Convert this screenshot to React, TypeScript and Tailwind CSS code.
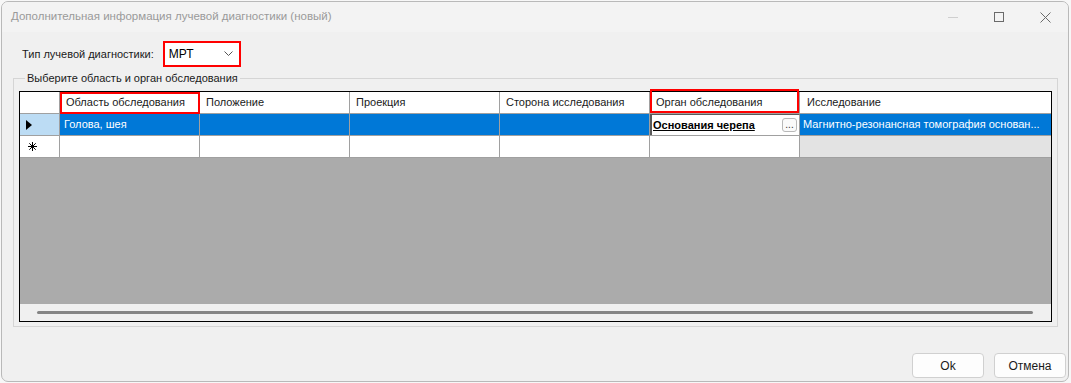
const COLUMNS = [
  { title: "Область обследования", w: "w-[140px]", marked: "box" },
  { title: "Положение", w: "w-[150px]" },
  { title: "Проекция", w: "w-[150px]" },
  { title: "Сторона исследования", w: "w-[150px]" },
  { title: "Орган обследования", w: "w-[150px]", marked: "tall" },
];

function TitleBar() {
  return (
    <div className="h-[30px] bg-[#f3f3f3] flex items-center text-[11.5px] text-[#9a9a9a]">
      <span className="pl-[9px] whitespace-nowrap">Дополнительная информация лучевой диагностики (новый)</span>
      <div className="ml-auto flex h-full">
        <div className="w-[46px] flex items-center justify-center">
          <div className="w-[10px] h-px bg-[#cfcfcf]" />
        </div>
        <div className="w-[46px] flex items-center justify-center">
          <div className="w-[10px] h-[10px] border border-[#6a6a6a]" />
        </div>
        <div className="w-[46px] flex items-center justify-center">
          <svg width="11" height="11" viewBox="0 0 11 11">
            <path d="M0.5 0.5 L10.5 10.5 M10.5 0.5 L0.5 10.5" stroke="#6a6a6a" strokeWidth="1" />
          </svg>
        </div>
      </div>
    </div>
  );
}

function Grid() {
  return (
    <div className="border border-black bg-[#ababab] h-[231px] flex flex-col">
      {/* header */}
      <div className="flex h-[22px] bg-white border-b border-[#a0a0a0]">
        <div className="w-[40px] border-r border-[#a0a0a0]" />
        {COLUMNS.map((c) => (
          <div
            key={c.title}
            className={`${c.w} relative border-r border-[#a0a0a0] pl-[6px] flex items-center whitespace-nowrap`}
          >
            {c.title}
            {c.marked === "box" && (
              <div className="absolute left-0 top-0 -right-px -bottom-px border-2 border-[#ff0000]" />
            )}
            {c.marked === "tall" && (
              <div className="absolute left-0 -top-[3px] right-0 bottom-0 border-2 border-[#ff0000]" />
            )}
          </div>
        ))}
        <div className="flex-1 pl-[7px] flex items-center">Исследование</div>
      </div>

      {/* selected row */}
      <div className="flex h-[22px] border-b border-[#a0a0a0]">
        <div className="w-[40px] border-r border-[#a0a0a0] bg-[#bcdcf4] flex items-center pl-[6px]">
          <svg width="6" height="10" viewBox="0 0 6 10">
            <path d="M0 0 L6 5 L0 10 Z" fill="#000" />
          </svg>
        </div>
        <div className="w-[140px] border-r border-[#a0a0a0] bg-[#0078d7] text-white pl-[4px] flex items-center">
          Голова, шея
        </div>
        <div className="w-[150px] border-r border-[#a0a0a0] bg-[#0078d7]" />
        <div className="w-[150px] border-r border-[#a0a0a0] bg-[#0078d7]" />
        <div className="w-[150px] border-r border-[#a0a0a0] bg-[#0078d7]" />
        <div className="w-[150px] border-r border-[#a0a0a0] bg-white flex items-center border-l-2 border-l-[#5a5a5a] border-t border-t-[#5a5a5a] pl-[1px] pr-[2px]">
          <span className="font-bold underline text-black whitespace-nowrap">Основания черепа</span>
          <div className="ml-auto w-[15px] h-[14px] rounded-[3px] border border-[#b8b8b8] bg-[#fafafa] text-[10px] leading-[8px] flex items-center justify-center text-[#333]">
            ...
          </div>
        </div>
        <div className="flex-1 min-w-0 bg-[#0078d7] text-white pl-[3px] flex items-center whitespace-nowrap overflow-hidden">
          Магнитно-резонансная томография основан...
        </div>
      </div>

      {/* new row */}
      <div className="flex h-[22px] border-b border-[#a0a0a0] bg-white">
        <div className="w-[40px] border-r border-[#a0a0a0] flex items-center pl-[8px]">
          <svg width="9" height="9" viewBox="0 0 9 9">
            <path
              d="M4.5 0 V9 M0 4.5 H9 M1.3 1.3 L7.7 7.7 M7.7 1.3 L1.3 7.7"
              stroke="#000"
              strokeWidth="1"
            />
          </svg>
        </div>
        {COLUMNS.map((c) => (
          <div key={c.title} className={`${c.w} border-r border-[#a0a0a0]`} />
        ))}
        <div className="flex-1 bg-[#e3e3e3]" />
      </div>

      <div className="flex-1" />

      {/* horizontal scrollbar */}
      <div className="h-[17px] bg-[#f0f0f0] flex items-center pl-[17px] pr-[18px]">
        <div className="h-[3px] flex-1 bg-[#858585] rounded-full" />
      </div>
    </div>
  );
}

export default function App() {
  return (
    <div
      className="w-[1071px] h-[383px] bg-[#f7f7f7] pt-[1px] pl-px text-[11px] text-[#1a1a1a]"
      style={{ fontFamily: '"Liberation Sans", Arial, sans-serif' }}
    >
      <div className="w-[1068px] h-[381px] bg-[#f0f0f0] border border-[#b9b9b9] rounded-[7px] overflow-hidden flex flex-col">
        <TitleBar />

        <div className="flex items-center mt-[9px] pl-[20px]">
          <span className="whitespace-nowrap">Тип лучевой диагностики:</span>
          <div className="ml-[9px] w-[78px] h-[26px] border-2 border-[#ff0000] bg-white flex items-center pl-[4px] pr-[6px]">
            <span className="text-black text-[12px]">МРТ</span>
            <svg className="ml-auto" width="9" height="6" viewBox="0 0 9 6">
              <path d="M0.5 0.5 L4.5 4.5 L8.5 0.5" fill="none" stroke="#555" strokeWidth="1" />
            </svg>
          </div>
        </div>

        <fieldset className="min-w-0 ml-[11px] mr-[10px] mt-[4px] border border-[#d5d5d5] px-[5px] pb-[4px] pt-[5px]">
          <legend className="ml-[6px] px-[2px] leading-[15px] whitespace-nowrap">Выберите область и орган обследования</legend>
          <Grid />
        </fieldset>

        <div className="flex justify-end gap-[10px] mt-[26px] pr-[2px]">
          <button className="w-[72px] h-[25px] rounded-[4px] border border-[#d0d0d0] bg-[#fdfdfd] text-[#1a1a1a] text-[12px]">
            Ok
          </button>
          <button className="w-[72px] h-[25px] rounded-[4px] border border-[#d0d0d0] bg-[#fdfdfd] text-[#1a1a1a] text-[12px]">
            Отмена
          </button>
        </div>
      </div>
    </div>
  );
}
